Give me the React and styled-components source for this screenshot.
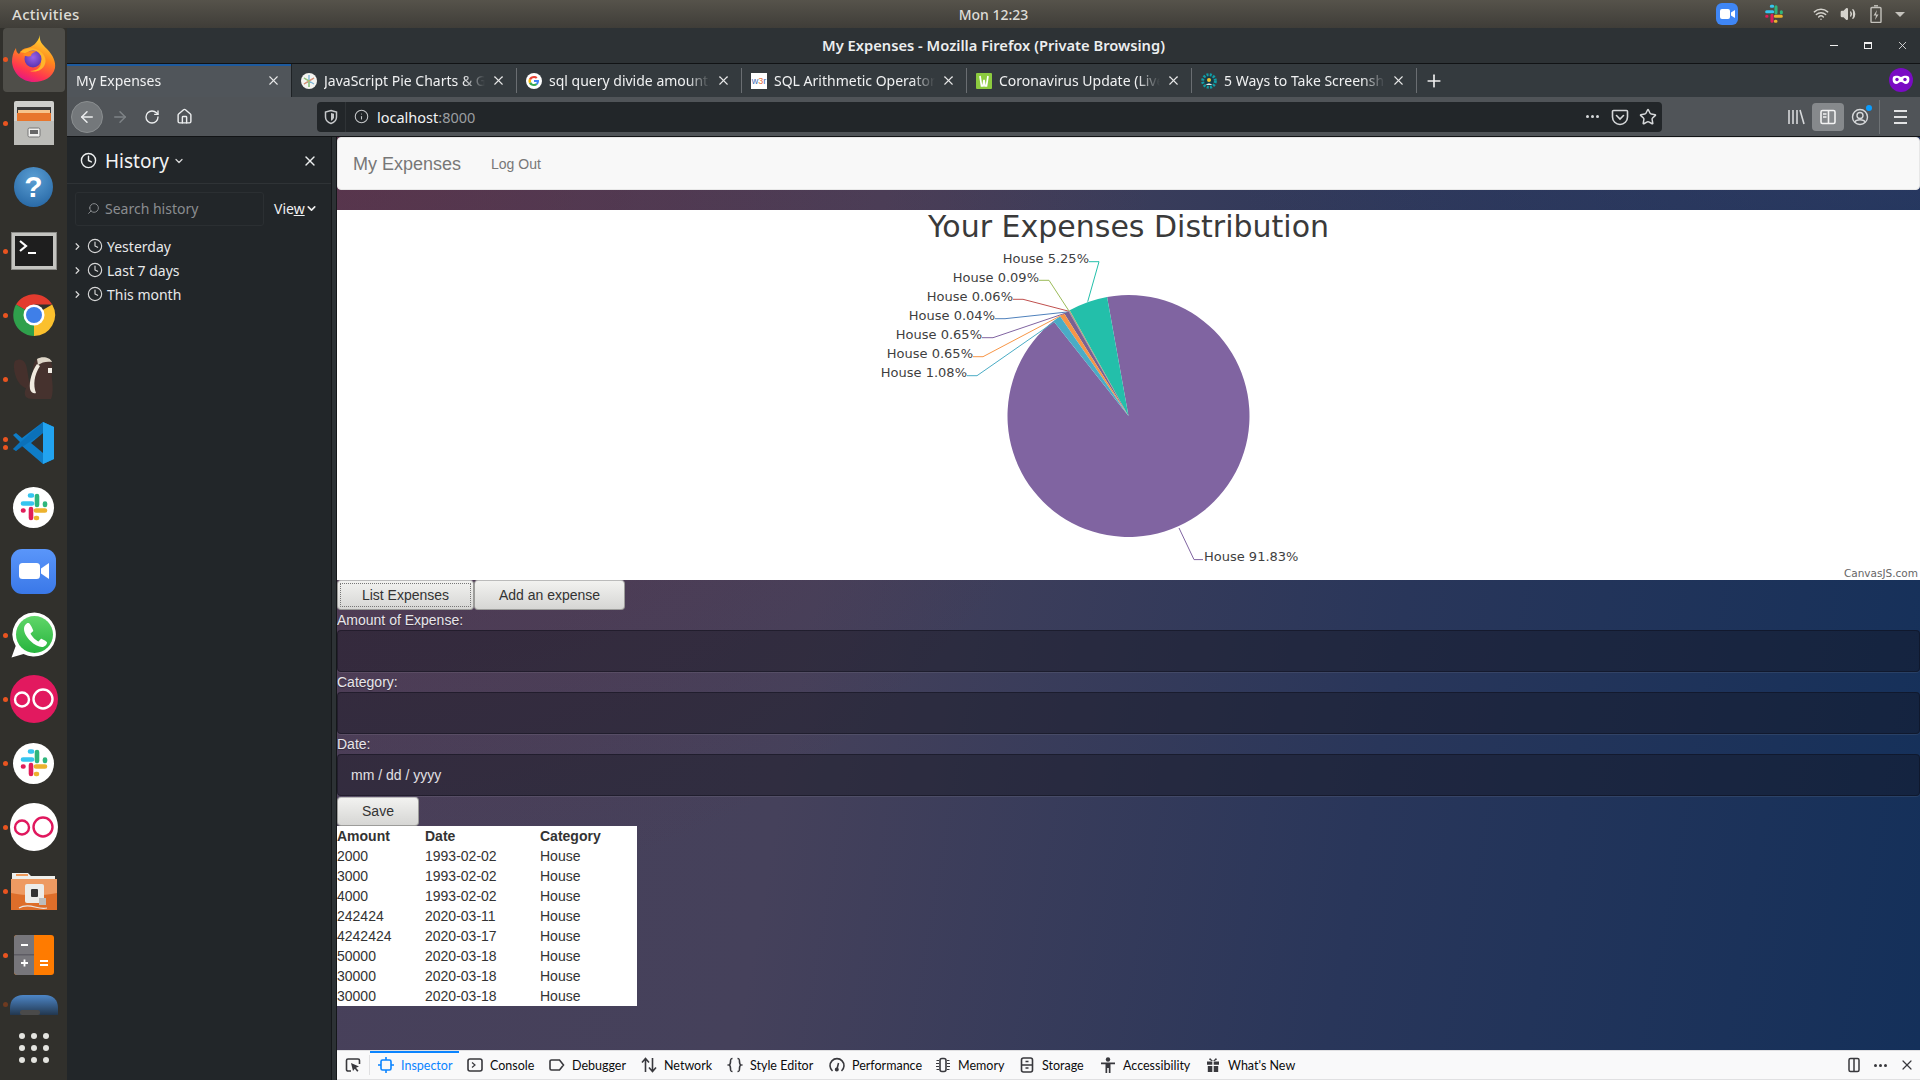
import React from 'react';
import styled, { createGlobalStyle } from 'styled-components';
import {
  ArrowLeft,
  ArrowRight,
  RotateCw,
  Home,
  Info,
  Star,
  X,
  Plus,
  Clock,
  ChevronRight,
  ChevronDown,
  Search,
  Wifi,
  Volume2,
} from 'lucide-react';

const UI_FONT = '"Noto Sans", "Open Sans", sans-serif';
const WEB_FONT = '"Liberation Sans", Arial, sans-serif';
const CHART_FONT = 'DejaVu Sans, sans-serif';

const GlobalStyle = createGlobalStyle`
  html, body {
    margin: 0;
    padding: 0;
    width: 1920px;
    height: 1080px;
    overflow: hidden;
    background: #222;
    font-family: ${UI_FONT};
  }
  * {
    box-sizing: border-box;
  }
`;

/* ---------- dock icons ---------- */

const FirefoxIcon = () => (
  <svg width="46" height="48" viewBox="0 0 46 48">
    <defs>
      <linearGradient id="ffBody" x1="0.7" y1="0" x2="0.3" y2="1">
        <stop offset="0" stopColor="#ffe03a" />
        <stop offset="0.42" stopColor="#ff8a1c" />
        <stop offset="0.78" stopColor="#ff3550" />
        <stop offset="1" stopColor="#e31587" />
      </linearGradient>
      <radialGradient id="ffGlobe" cx="0.5" cy="0.4" r="0.6">
        <stop offset="0" stopColor="#9a62e8" />
        <stop offset="1" stopColor="#5a34b0" />
      </radialGradient>
    </defs>
    <path d="M29 1c-1 6 2 9 7 14 6 6 9 13 8 19-2 9-11 14-21 14C11 48 2 39 1 28c0-5 1-10 4-14 0 3 1 5 3 6 2-4 5-6 8-6 5-1 11-5 13-13z" fill="url(#ffBody)" />
    <path d="M9 18c5-4 13-5 18-2 6 3 9 9 7 14-2 6-9 9-15 7 7 0 12-4 11-10-1-4-6-6-10-5-1-2-6-3-11-4z" fill="#ffb52b" />
    <circle cx="22" cy="25" r="8.500" fill="url(#ffGlobe)" />
    <path d="M12 21c3-4 10-5 14-3-4 0-6 2-6 4-3 1-6 0-8-1z" fill="#ff8a1e" />
  </svg>
);

const FilesIcon = () => (
  <svg width="42" height="44" viewBox="0 0 42 44">
    <rect x="1" y="0" width="40" height="44" rx="2" fill="#cfcfcc" />
    <rect x="4" y="6" width="34" height="14" fill="#3a3a3a" />
    <rect x="5" y="9" width="32" height="3" fill="#f6c48c" />
    <rect x="4" y="12" width="34" height="8" fill="#e8762c" />
    <rect x="1" y="20" width="40" height="24" fill="#bcbcb8" />
    <rect x="15" y="27" width="12" height="9" rx="1.500" fill="#efefed" stroke="#777" />
    <rect x="17" y="29" width="8" height="4" fill="#666" />
  </svg>
);

const HelpIcon = () => <HelpBall>?</HelpBall>;

const TerminalIcon = () => (
  <svg width="46" height="38" viewBox="0 0 46 38">
    <rect x="0.500" y="0.500" width="45" height="37" fill="#c4c4c0" stroke="#8b8b88" />
    <rect x="4" y="4" width="38" height="30" fill="#1e1e1e" />
    <path d="M9 9l6 5-6 5" fill="none" stroke="#fff" strokeWidth="2.200" />
    <path d="M17 21h8" stroke="#fff" strokeWidth="2" />
  </svg>
);

const ChromeIcon = () => (
  <svg width="46" height="46" viewBox="0 0 46 46">
    <path d="M23 23L5 12.600A21 21 0 0 1 41.200 12.500H23z" fill="#e33b2e" />
    <path d="M23 23L41.200 12.500A21 21 0 0 1 23 44z" fill="#fbc02d" />
    <path d="M23 23L23 44A21 21 0 0 1 5 12.600z" fill="#2fa04c" />
    <circle cx="23" cy="23" r="10.500" fill="#fff" />
    <circle cx="23" cy="23" r="8" fill="#3f7fe8" />
  </svg>
);

const BeaverIcon = () => (
  <svg width="44" height="48" viewBox="0 0 44 48">
    <path d="M3 6c6-4 11 0 12 8l3 18c-4 4-12-3-14-10C2 16 1 10 3 6z" fill="#45302c" />
    <path d="M25 4c6-3 14 0 15 6 1 5-1 8 0 14 1 8 1 16-1 20H21c-7 0-9-3-8-8 2-7 8-13 8-20 0-5 1-10 4-12z" fill="#46322e" />
    <path d="M25 9c-5 7-8 17-7 25 1 4 4 5 6 4-3-8-2-18 4-27z" fill="#f0eadf" />
    <path d="M25 4c5-3 13-2 15 3-5-1-10 0-14 3z" fill="#ded6c8" />
    <rect x="36" y="13" width="4" height="5" fill="#f1ede5" />
  </svg>
);

const VsCodeIcon = () => (
  <svg width="44" height="44" viewBox="0 0 44 44">
    <path d="M31 1l11 5v32l-11 5L10 25l-6 5-3-2 7-7-7-7 3-2 6 5z" fill="#0e7dc8" />
    <path d="M31 1l11 5v32l-11 5z" fill="#22a3f0" />
    <path d="M31 12v20l-12-10z" fill="#31302c" />
    <path d="M1 28l3 2L31 12V1z" fill="#0a68ad" opacity="0.55" />
  </svg>
);

const SlackMark = ({ size = 30 }) => (
  <svg width={size} height={size} viewBox="0 0 30 30" strokeLinecap="round" fill="none">
    <path d="M4 11.500h9M11 3.500h2" stroke="#36c5f0" strokeWidth="4.600" />
    <path d="M18 4v9M26 11.500v1.500" stroke="#2eb67d" strokeWidth="4.600" />
    <path d="M17 18.500h9M17 26h1" stroke="#ecb22e" strokeWidth="4.600" />
    <path d="M12 17v9M4 18.500h.5" stroke="#e01e5a" strokeWidth="4.600" />
  </svg>
);

const SlackIcon = () => (
  <WhiteDisc>
    <SlackMark />
  </WhiteDisc>
);

const ZoomIcon = () => (
  <ZoomTile>
    <svg width="30" height="18" viewBox="0 0 30 18">
      <rect x="0" y="1" width="21" height="16" rx="3.500" fill="#fff" />
      <path d="M22 6.500L30 1v16l-8-5.500z" fill="#fff" />
    </svg>
  </ZoomTile>
);

const WhatsappIcon = () => (
  <svg width="46" height="46" viewBox="0 0 46 46">
    <defs>
      <linearGradient id="waFill" x1="0" y1="0" x2="0" y2="1">
        <stop offset="0" stopColor="#60d669" />
        <stop offset="1" stopColor="#27b43e" />
      </linearGradient>
    </defs>
    <path d="M23.500 0.500a22 22 0 0 0-18.800 33.400L0.500 45.500l12-3.600A22 22 0 1 0 23.500 0.500z" fill="#fff" />
    <circle cx="23.500" cy="22.500" r="18.500" fill="url(#waFill)" />
    <path d="M17 11c-1.500 0-4 2.500-4 6 0 4 3 8.500 6.500 12s8 6 11.500 6c3 0 5-2.500 5-4.500 0-1.200-5-3.800-6-3.800l-2.500 2.800c-3-1.300-6.500-5-8-8l2.800-2.500c0-1.200-3.300-8-4.800-8z" fill="#fff" />
  </svg>
);

const RingsIcon = ({ light }) => (
  <RingsDisc $light={light}>
    <svg width="42" height="24" viewBox="0 0 42 24" fill="none" stroke={light ? '#e0185e' : '#fff'} strokeWidth="2.400">
      <circle cx="9" cy="12.500" r="7" />
      <circle cx="30" cy="12" r="9.500" />
    </svg>
  </RingsDisc>
);

const FolderIcon = () => (
  <svg width="46" height="42" viewBox="0 0 46 42">
    <path d="M1 3h16l3 3h24v8H1z" fill="#efefec" />
    <rect x="5" y="4" width="12" height="2" fill="#f09a5a" />
    <path d="M0 9h46v31H0z" fill="#de6e2a" />
    <path d="M0 9h46v14c-15 3-31 3-46 0z" fill="#ee9a62" />
    <rect x="14" y="14" width="19" height="19" rx="2" fill="#ececea" />
    <rect x="20" y="19" width="7" height="8" rx="1" fill="#333" />
    <rect x="28" y="28" width="7" height="7" fill="#bdbdbd" />
    <path d="M8 38c5-3 12-2 16-1 4 1 7 2 12 1" fill="none" stroke="#e8e8e8" strokeWidth="1.200" />
  </svg>
);

const CalcIcon = () => (
  <svg width="40" height="40" viewBox="0 0 40 40">
    <rect width="40" height="40" rx="3" fill="#ff7b00" />
    <path d="M3 0h17v40H3a3 3 0 0 1-3-3V3a3 3 0 0 1 3-3z" fill="#77767b" />
    <path d="M0 19h20v1.500H0z" fill="#5e5c64" />
    <path d="M7 10h7M7 28h7M10.500 24.500v7M26 26h8M26 30h8" stroke="#fff" strokeWidth="1.800" />
  </svg>
);

const DriveIcon = () => (
  <svg width="48" height="20" viewBox="0 0 48 20">
    <defs>
      <linearGradient id="driveFill" x1="0" y1="0" x2="0" y2="1">
        <stop offset="0" stopColor="#4d86c7" />
        <stop offset="1" stopColor="#22374f" />
      </linearGradient>
    </defs>
    <path d="M0 20v-7C0 5 5 0 13 0h22c8 0 13 5 13 13v7z" fill="url(#driveFill)" />
    <rect x="10" y="15" width="20" height="5" rx="2" fill="#4a4a4a" />
  </svg>
);

const dockItems = [
  { id: 'firefox', icon: <FirefoxIcon />, dots: 1, active: true },
  { id: 'files', icon: <FilesIcon />, dots: 1 },
  { id: 'help', icon: <HelpIcon />, dots: 0 },
  { id: 'terminal', icon: <TerminalIcon />, dots: 1 },
  { id: 'chrome', icon: <ChromeIcon />, dots: 1 },
  { id: 'beaver', icon: <BeaverIcon />, dots: 1 },
  { id: 'vscode', icon: <VsCodeIcon />, dots: 2 },
  { id: 'slack', icon: <SlackIcon />, dots: 0 },
  { id: 'zoom', icon: <ZoomIcon />, dots: 0 },
  { id: 'whatsapp', icon: <WhatsappIcon />, dots: 1 },
  { id: 'rings', icon: <RingsIcon />, dots: 1 },
  { id: 'slack2', icon: <SlackIcon />, dots: 1 },
  { id: 'rings2', icon: <RingsIcon light />, dots: 1 },
  { id: 'folder', icon: <FolderIcon />, dots: 1 },
  { id: 'calc', icon: <CalcIcon />, dots: 1 },
];

/* ---------- favicons and toolbar glyphs ---------- */

const PieFavicon = () => (
  <svg width="16" height="16" viewBox="0 0 16 16">
    <circle cx="8" cy="8" r="8" fill="#f4f4f0" />
    <path d="M8 8V2M8 8l5-3M8 8l5 3M8 8v6M8 8l-5 3M8 8L3 5" stroke="#7fb7d8" strokeWidth="1.400" />
    <path d="M8 8l5-3M8 8L3 11" stroke="#e88f6a" strokeWidth="1.400" />
    <path d="M8 8v6M8 8L3 5" stroke="#9cc870" strokeWidth="1.400" />
  </svg>
);

const GoogleFavicon = () => (
  <svg width="16" height="16" viewBox="0 0 16 16">
    <circle cx="8" cy="8" r="8" fill="#fff" />
    <path d="M13 8.100c0-.4 0-.7-.1-1H8v2h2.800c-.2.700-.5 1.200-1 1.500l1.600 1.200c1-.9 1.600-2.200 1.600-3.700z" fill="#4285f4" />
    <path d="M8 13c1.400 0 2.500-.4 3.400-1.200l-1.600-1.200c-.5.300-1.100.5-1.800.5-1.300 0-2.500-.9-2.900-2.100L3 10.200C3.800 11.900 5.800 13 8 13z" fill="#34a853" />
    <path d="M5.100 9c-.2-.7-.2-1.400 0-2L3 5.800c-.7 1.400-.7 3 0 4.400z" fill="#fbbc05" />
    <path d="M8 4.900c.8 0 1.500.3 2 .8L11.500 4.300C10.600 3.500 9.400 3 8 3 5.800 3 3.800 4.100 3 5.800L5.100 7C5.500 5.800 6.700 4.900 8 4.900z" fill="#ea4335" />
  </svg>
);

const W3Favicon = () => (
  <W3Box>
    <b>w</b>
    <em>3</em>
    <b>r</b>
  </W3Box>
);

const WorldFavicon = () => (
  <svg width="16" height="16" viewBox="0 0 16 16">
    <rect width="16" height="16" rx="1" fill="#8ccb3f" />
    <path d="M4 3l1.500 10h1.500L8 7l1 6h1.500L12 3" fill="none" stroke="#fff" strokeWidth="1.700" />
  </svg>
);

const GearFavicon = () => (
  <svg width="16" height="16" viewBox="0 0 16 16">
    <circle cx="8" cy="8" r="6.300" fill="none" stroke="#0f9fa8" strokeWidth="3" strokeDasharray="2 1.300" />
    <circle cx="8" cy="8" r="4.500" fill="#123b4a" />
    <circle cx="8" cy="7" r="2" fill="#f2c230" />
    <path d="M5 12c1-2 5-2 6 0z" fill="#e8e8e8" />
  </svg>
);

const ShieldIcon = () => (
  <svg width="16" height="16" viewBox="0 0 16 16" fill="none" stroke="#c6c8ca" strokeWidth="1.500">
    <path d="M8 1.500l5.500 1.500v5c0 3-2.500 5.500-5.500 6.500-3-1-5.500-3.500-5.500-6.500V3z" />
    <path d="M8 4l3 .8v3.400c0 1.600-1.400 2.800-3 3.500z" fill="#c6c8ca" stroke="none" />
  </svg>
);

const PocketIcon = () => (
  <svg width="18" height="18" viewBox="0 0 18 18" fill="none" stroke="#d6d8da" strokeWidth="1.600">
    <path d="M2.500 2.500h13a1 1 0 0 1 1 1V9a7.500 7.500 0 0 1-15 0V3.500a1 1 0 0 1 1-1z" />
    <path d="M5.500 7.500L9 11l3.500-3.500" strokeLinecap="round" />
  </svg>
);

const LibraryIcon = () => (
  <svg width="18" height="18" viewBox="0 0 18 18" stroke="#d6d8da" strokeWidth="1.600">
    <path d="M2 2v14M6 2v14M10 2v14M13 2l4 14" />
  </svg>
);

const SidebarIcon = () => (
  <svg width="18" height="18" viewBox="0 0 18 18" fill="none" stroke="#f2f2f2" strokeWidth="1.600">
    <rect x="2" y="2.500" width="14" height="13" rx="1.500" />
    <path d="M9.500 2.500v13" />
    <path d="M4 6h3.500M4 9h3.500" />
  </svg>
);

const ProfileIcon = () => (
  <ProfileWrap>
    <svg width="18" height="18" viewBox="0 0 18 18" fill="none" stroke="#d6d8da" strokeWidth="1.400">
      <circle cx="9" cy="9" r="7.500" />
      <circle cx="9" cy="7.500" r="3" />
      <path d="M4 14c1-3 9-3 10 0" />
    </svg>
    <ProfileDot />
  </ProfileWrap>
);

const MaskIcon = () => (
  <MaskBadge>
    <svg width="18" height="10" viewBox="0 0 18 10">
      <path d="M1 2c3-2 5-1 8 0 3-1 5-2 8 0 1 3 0 7-3 7-2 0-3-2-5-2S6 9 4 9C1 9 0 5 1 2z" fill="#fff" />
      <circle cx="5" cy="4.500" r="1.700" fill="#7a0bc4" />
      <circle cx="13" cy="4.500" r="1.700" fill="#7a0bc4" />
    </svg>
  </MaskBadge>
);

const PickIcon = () => (
  <svg width="16" height="16" viewBox="0 0 16 16" fill="none" stroke="#38383d" strokeWidth="1.600">
    <path d="M6 14H3a1.500 1.500 0 0 1-1.500-1.500v-9A1.500 1.500 0 0 1 3 2h10a1.500 1.500 0 0 1 1.500 1.500V7" />
    <path d="M6 6l8 3.500-3 1.200 2.500 3-1.300 1-2.400-3L8 14z" fill="#38383d" stroke="none" />
  </svg>
);

const devIcon = (children, filled) => (
  <svg
    width="16"
    height="16"
    viewBox="0 0 16 16"
    fill={filled ? '#38383d' : 'none'}
    stroke={filled ? 'none' : 'currentColor'}
    strokeWidth="1.600"
  >
    {children}
  </svg>
);

const devTabs = [
  {
    name: 'Inspector',
    width: 89,
    active: true,
    icon: devIcon(
      <>
        <rect x="3" y="3" width="10" height="10" rx="1.500" />
        <path d="M8 0v3M8 13v3M0 8h3M13 8h3" />
      </>
    ),
  },
  {
    name: 'Console',
    width: 82,
    icon: devIcon(
      <>
        <rect x="1" y="2" width="14" height="12" rx="2" />
        <path d="M5 5.500L8 8l-3 2.500" strokeWidth="1.200" />
      </>
    ),
  },
  {
    name: 'Debugger',
    width: 92,
    icon: devIcon(<path d="M2.500 3h8l4 5-4 5h-8A1.500 1.500 0 0 1 1 11.500v-7A1.500 1.500 0 0 1 2.500 3z" />),
  },
  {
    name: 'Network',
    width: 86,
    icon: devIcon(<path d="M4.500 15V2M1 5.500L4.500 1.500 8 5.500M11.500 1v13M8 10.500l3.500 4 3.500-4" />),
  },
  {
    name: 'Style Editor',
    width: 102,
    icon: devIcon(
      <path d="M5.500 1.500c-2 0-2 1-2 3s0 3-1.500 3.500C3.500 8.500 3.500 9.500 3.500 11.500s0 3 2 3M10.500 1.500c2 0 2 1 2 3s0 3 1.500 3.500c-1.500.5-1.500 1.500-1.500 3.500s0 3-2 3" />
    ),
  },
  {
    name: 'Performance',
    width: 106,
    icon: devIcon(
      <>
        <path d="M3.500 14A7 7 0 1 1 12.500 14" />
        <path d="M9.500 6L8 12" />
        <circle cx="7.800" cy="12.500" r="1.200" fill="currentColor" />
      </>
    ),
  },
  {
    name: 'Memory',
    width: 84,
    icon: devIcon(
      <>
        <rect x="5" y="1.500" width="6" height="13" rx="2" />
        <path d="M1.500 3.500H4M1 6.500h3M1 9.500h3M1.500 12.500H4M12 3.500h2.500M12 6.500h3M12 9.500h3M12 12.500h2.500" strokeWidth="1" />
      </>
    ),
  },
  {
    name: 'Storage',
    width: 81,
    icon: devIcon(
      <>
        <rect x="2.500" y="1" width="11" height="14" rx="2" />
        <path d="M2.500 8h11M6.500 4.500h3M6.500 11h3" />
      </>
    ),
  },
  {
    name: 'Accessibility',
    width: 105,
    icon: devIcon(
      <>
        <circle cx="8" cy="2.500" r="2.200" />
        <path d="M1 5.500h14v1.800h-4.500V16H8.800v-5H7.200v5H5.500V7.300H1z" />
      </>,
      true
    ),
  },
  {
    name: "What's New",
    width: 102,
    icon: devIcon(
      <>
        <path d="M2 4.500h5.300v3.300H2zM8.700 4.500H14v3.300H8.700zM2.800 9h4.500v6H2.800zM8.700 9h4.500v6H8.700z" />
        <path d="M5 1l3 3 3-3 1 1.500L9.500 4h-3L4 2.500z" />
      </>,
      true
    ),
  },
];

/* ---------- data ---------- */

const tabs = [
  { title: 'My Expenses', active: true },
  { title: 'JavaScript Pie Charts & Graphs', icon: <PieFavicon /> },
  { title: 'sql query divide amounts by', icon: <GoogleFavicon /> },
  { title: 'SQL Arithmetic Operators', icon: <W3Favicon /> },
  { title: 'Coronavirus Update (Live)', icon: <WorldFavicon /> },
  { title: '5 Ways to Take Screenshots', icon: <GearFavicon /> },
];

const historyRows = ['Yesterday', 'Last 7 days', 'This month'];

const expenses = [
  ['2000', '1993-02-02'],
  ['3000', '1993-02-02'],
  ['4000', '1993-02-02'],
  ['242424', '2020-03-11'],
  ['4242424', '2020-03-17'],
  ['50000', '2020-03-18'],
  ['30000', '2020-03-18'],
  ['30000', '2020-03-18'],
];

const CX = 791.5;
const CY = 206;
const R = 121;

// degrees clockwise from 12 o'clock, read off the reference
const slices = [
  { from: -10.2, to: 321.65, color: '#8064A1' },
  { from: -29.1, to: -10.2, color: '#23BFAA' },
  { from: -29.42, to: -29.1, color: '#9BBB58' },
  { from: -29.64, to: -29.42, color: '#C0504E' },
  { from: -29.78, to: -29.64, color: '#4F81BC' },
  { from: -32.12, to: -29.78, color: '#7a6191' },
  { from: -34.46, to: -32.12, color: '#F79647' },
  { from: -38.35, to: -34.46, color: '#4AACC5' },
];

const pieLabels = [
  { text: 'House 5.25%', x: 752, y: 53, color: '#23BFAA', line: '752,51.7 762,51.7 750.7,91.7' },
  { text: 'House 0.09%', x: 702, y: 72, color: '#9BBB58', line: '702,70.3 712,70.3 732,101' },
  { text: 'House 0.06%', x: 676, y: 91, color: '#C0504E', line: '676,89.3 686,89.3 731,101' },
  { text: 'House 0.04%', x: 658, y: 110, color: '#4F81BC', line: '658,108.7 668,108.7 730,102' },
  { text: 'House 0.65%', x: 645, y: 129, color: '#8064A1', line: '645,127.7 656,127.7 728,103.3' },
  { text: 'House 0.65%', x: 636, y: 148, color: '#F79647', line: '636,146.7 646,146.7 725,105' },
  { text: 'House 1.08%', x: 630, y: 167, color: '#4AACC5', line: '630,165.7 640,165.7 720,110' },
];

const point = deg => {
  const rad = (deg * Math.PI) / 180;
  return [CX + R * Math.sin(rad), CY - R * Math.cos(rad)];
};

const slicePath = ({ from, to }) => {
  const [x1, y1] = point(from);
  const [x2, y2] = point(to);
  const large = to - from > 180 ? 1 : 0;
  return `M${CX} ${CY}L${x1} ${y1}A${R} ${R} 0 ${large} 1 ${x2} ${y2}Z`;
};

const PieChart = () => (
  <svg width="1583" height="370" viewBox="0 0 1583 370">
    <text x={CX} y="27" textAnchor="middle" fontFamily={CHART_FONT} fontSize="30" fill="#3a3a3a">
      Your Expenses Distribution
    </text>
    {slices.map(s => (
      <path key={s.from} d={slicePath(s)} fill={s.color} />
    ))}
    {pieLabels.map(l => (
      <g key={l.line}>
        <polyline points={l.line} fill="none" stroke={l.color} strokeWidth="1" />
        <text x={l.x} y={l.y} textAnchor="end" fontFamily={CHART_FONT} fontSize="13" fill="#3f3f3f">
          {l.text}
        </text>
      </g>
    ))}
    <polyline points="842,318 857,349.6 866,349.6" fill="none" stroke="#8064A1" strokeWidth="1" />
    <text x="867" y="351" fontFamily={CHART_FONT} fontSize="13" fill="#3f3f3f">
      House 91.83%
    </text>
    <text x="1581" y="367" textAnchor="end" fontFamily={CHART_FONT} fontSize="10.5" fill="#666">
      CanvasJS.com
    </text>
  </svg>
);

/* ---------- page ---------- */

const App = () => (
  <Screen>
    <GlobalStyle />
    <TopBar>
      <Activities>Activities</Activities>
      <TopClock>Mon 12:23</TopClock>
      <TrayZoom>
        <svg width="15" height="10" viewBox="0 0 15 10">
          <rect width="10" height="10" rx="2" fill="#fff" />
          <path d="M11 3.500L15 1v8l-4-2.500z" fill="#fff" />
        </svg>
      </TrayZoom>
      <TraySlack>
        <SlackMark size={20} />
      </TraySlack>
      <TrayGlyphs>
        <Wifi size={16} color="#d4d2cc" strokeWidth={2.2} />
        <Volume2 size={16} color="#d4d2cc" fill="#d4d2cc" strokeWidth={2} />
        <TrayBattery>
          <svg width="12" height="18" viewBox="0 0 12 18" fill="none" stroke="#c4c2bc" strokeWidth="1.400">
            <rect x="1" y="2.500" width="10" height="15" rx="1" />
            <path d="M4 0.800h4" />
            <path d="M7 5L3.500 10.500H6L5 15l3.500-5.500H6z" fill="#c4c2bc" stroke="none" />
          </svg>
        </TrayBattery>
        <TrayCaret />
      </TrayGlyphs>
    </TopBar>
    <Desktop>
      <Dock>
        {dockItems.map(({ id, icon, dots, active }) => (
          <DockItem key={id} $active={active}>
            <DockDots>
              {Array.from({ length: dots }).map((_, i) => (
                <i key={i} />
              ))}
            </DockDots>
            {icon}
          </DockItem>
        ))}
        <DriveSlot>
          <DimDot />
          <DriveIcon />
        </DriveSlot>
        <DotGrid>
          {Array.from({ length: 9 }).map((_, i) => (
            <i key={i} />
          ))}
        </DotGrid>
      </Dock>
      <Browser>
        <TitleBar>
          <WindowTitle>My Expenses - Mozilla Firefox (Private Browsing)</WindowTitle>
          <WindowButtons>
            <MinButton />
            <MaxButton />
            <X size={13} color="#e4e4e4" strokeWidth={1.6} />
          </WindowButtons>
        </TitleBar>
        <TabBar>
          {tabs.map(({ title, active, icon }) => (
            <Tab key={title} $active={active}>
              {icon && <Favicon>{icon}</Favicon>}
              <TabTitle>{title}</TabTitle>
              <X size={15} color="#e8e8e8" strokeWidth={1.7} />
            </Tab>
          ))}
          <NewTab>
            <Plus size={20} color="#eee" strokeWidth={2} />
          </NewTab>
          <MaskIcon />
        </TabBar>
        <Toolbar>
          <BackButton>
            <ArrowLeft size={18} color="#eceeef" strokeWidth={2} />
          </BackButton>
          <NavButton>
            <ArrowRight size={18} color="#7e8386" strokeWidth={2} />
          </NavButton>
          <NavButton>
            <RotateCw size={16} color="#eceeef" strokeWidth={2} />
          </NavButton>
          <NavButton>
            <Home size={17} color="#eceeef" strokeWidth={2} />
          </NavButton>
          <UrlBar>
            <UrlShield>
              <ShieldIcon />
            </UrlShield>
            <UrlInfo>
              <Info size={15} color="#c6c8ca" strokeWidth={1.7} />
            </UrlInfo>
            <UrlText>
              localhost<span>:8000</span>
            </UrlText>
            <UrlAction>
              <UrlDots>
                <i />
                <i />
                <i />
              </UrlDots>
            </UrlAction>
            <UrlAction>
              <PocketIcon />
            </UrlAction>
            <UrlAction>
              <Star size={18} color="#d6d8da" strokeWidth={2} />
            </UrlAction>
          </UrlBar>
          <RightTools>
            <ToolButton>
              <LibraryIcon />
            </ToolButton>
            <ToolButton $active>
              <SidebarIcon />
            </ToolButton>
            <ToolButton>
              <ProfileIcon />
            </ToolButton>
            <ToolSeparator />
            <ToolButton>
              <Burger>
                <i />
                <i />
                <i />
              </Burger>
            </ToolButton>
          </RightTools>
        </Toolbar>
        <Main>
          <Sidebar>
            <SidebarHeader>
              <Clock size={17} color="#eceeef" strokeWidth={2} />
              <SidebarTitle>History</SidebarTitle>
              <ChevronDown size={12} color="#d8d8d8" strokeWidth={2.5} />
              <SidebarClose>
                <X size={16} color="#eceeef" strokeWidth={2} />
              </SidebarClose>
            </SidebarHeader>
            <SearchRow>
              <SearchBox>
                <FlippedSearch>
                  <Search size={13} color="#8a8d90" strokeWidth={1.8} />
                </FlippedSearch>
                <span>Search history</span>
              </SearchBox>
              <ViewButton>
                <span>
                  Vie<u>w</u>
                </span>
                <ChevronDown size={13} color="#eee" strokeWidth={3} />
              </ViewButton>
            </SearchRow>
            <HistoryTree>
              {historyRows.map(row => (
                <HistoryRow key={row}>
                  <ChevronRight size={11} color="#d8d8d8" strokeWidth={2.6} />
                  <Clock size={16} color="#d8d8d8" strokeWidth={1.7} />
                  <span>{row}</span>
                </HistoryRow>
              ))}
            </HistoryTree>
          </Sidebar>
          <Splitter />
          <Content>
            <Page>
              <Navbar>
                <Brand>My Expenses</Brand>
                <NavLink>Log Out</NavLink>
              </Navbar>
              <ChartPanel>
                <PieChart />
              </ChartPanel>
              <ButtonRow>
                <FormButton $focused $width={137}>
                  List Expenses
                </FormButton>
                <FormButton $width={151}>Add an expense</FormButton>
              </ButtonRow>
              <Field>
                <FieldLabel>Amount of Expense:</FieldLabel>
                <FieldInput readOnly />
              </Field>
              <Field>
                <FieldLabel>Category:</FieldLabel>
                <FieldInput readOnly />
              </Field>
              <Field>
                <FieldLabel>Date:</FieldLabel>
                <FieldInput readOnly value="mm / dd / yyyy" />
              </Field>
              <SaveButton $width={82}>Save</SaveButton>
              <ExpenseTable>
                <thead>
                  <tr>
                    <th>Amount</th>
                    <th>Date</th>
                    <th>Category</th>
                  </tr>
                </thead>
                <tbody>
                  {expenses.map(([amount, date], i) => (
                    <tr key={i}>
                      <td>{amount}</td>
                      <td>{date}</td>
                      <td>House</td>
                    </tr>
                  ))}
                </tbody>
              </ExpenseTable>
            </Page>
            <DevTools>
              <PickSlot>
                <PickIcon />
              </PickSlot>
              {devTabs.map(({ name, icon, active, width }) => (
                <DevTab key={name} $active={active} $width={width}>
                  {icon}
                  <span>{name}</span>
                </DevTab>
              ))}
              <DevActions>
                <svg width="16" height="16" viewBox="0 0 16 16" fill="none" stroke="#38383d" strokeWidth="1.500">
                  <rect x="3" y="1.500" width="10" height="13" rx="1.500" />
                  <path d="M8 1.500v13" />
                </svg>
                <UrlDotsDark>
                  <i />
                  <i />
                  <i />
                </UrlDotsDark>
                <X size={16} color="#38383d" strokeWidth={1.8} />
              </DevActions>
            </DevTools>
          </Content>
        </Main>
      </Browser>
    </Desktop>
  </Screen>
);

const Screen = styled.div`
  width: 1920px;
  height: 1080px;
  display: flex;
  flex-direction: column;
  overflow: hidden;
`;

const TopBar = styled.header`
  height: 28px;
  flex: none;
  display: flex;
  align-items: center;
  position: relative;
  padding: 0 12px;
  background: linear-gradient(#56534b, #3f3d38);
  color: #dedcd6;
  font-size: 14px;
  font-weight: 500;
`;

const Activities = styled.span`
  width: 1000px;
  font-size: 15px;
  letter-spacing: 0.3px;
`;

const TopClock = styled.span`
  position: absolute;
  left: 0;
  right: 0;
  text-align: center;
  padding-left: 67px;
  pointer-events: none;
`;

const TrayZoom = styled.div`
  width: 22px;
  height: 22px;
  margin-left: 704px;
  border-radius: 6px;
  background: #3f86f5;
  display: flex;
  align-items: center;
  justify-content: center;
`;

const TraySlack = styled.div`
  margin-left: 24px;
  width: 24px;
  display: flex;
  justify-content: center;
`;

const TrayGlyphs = styled.div`
  display: flex;
  align-items: center;
  gap: 11px;
  margin-left: 27px;
`;

const TrayBattery = styled.span`
  display: flex;
  margin-left: 3px;
`;

const TrayCaret = styled.i`
  width: 0;
  height: 0;
  margin-left: 2px;
  border-left: 5px solid transparent;
  border-right: 5px solid transparent;
  border-top: 5px solid #c4c2bc;
`;

const Desktop = styled.div`
  flex: 1;
  display: flex;
  min-height: 0;
`;

const Dock = styled.nav`
  width: 67px;
  flex: none;
  display: flex;
  flex-direction: column;
  align-items: center;
  background: #31302c;
`;

const DockItem = styled.div`
  position: relative;
  width: 62px;
  height: 64px;
  flex: none;
  display: flex;
  align-items: center;
  justify-content: center;
  padding-bottom: ${p => (p.$active ? '4px' : '2px')};
  border-radius: 4px;
  background: ${p => (p.$active ? '#4f4e49' : 'transparent')};
`;

const DockDots = styled.div`
  position: absolute;
  left: 0;
  top: 0;
  bottom: 2px;
  display: flex;
  flex-direction: column;
  justify-content: center;
  gap: 3px;

  i {
    width: 5px;
    height: 5px;
    border-radius: 50%;
    background: #e95420;
  }
`;

const HelpBall = styled.div`
  width: 39px;
  height: 40px;
  border-radius: 50%;
  background: radial-gradient(circle at 50% 30%, #5b9fd4, #1f5f9e);
  color: #fff;
  font: bold 30px/40px ${WEB_FONT};
  text-align: center;
`;

const WhiteDisc = styled.div`
  width: 41px;
  height: 41px;
  border-radius: 50%;
  background: #fff;
  display: flex;
  align-items: center;
  justify-content: center;
`;

const ZoomTile = styled.div`
  width: 45px;
  height: 45px;
  border-radius: 11px;
  background: linear-gradient(#5a96fa, #3a78e8);
  display: flex;
  align-items: center;
  justify-content: center;
`;

const RingsDisc = styled.div`
  width: 48px;
  height: 48px;
  border-radius: 50%;
  background: ${p => (p.$light ? '#fff' : '#e2195f')};
  display: flex;
  align-items: center;
  justify-content: center;
`;

const DriveSlot = styled.div`
  position: relative;
  width: 62px;
  height: 45px;
  flex: none;
  display: flex;
  justify-content: center;
  padding-top: 7px;
`;

const DimDot = styled.i`
  position: absolute;
  left: 0;
  top: 14px;
  width: 5px;
  height: 5px;
  border-radius: 50%;
  background: #6e3a20;
`;

const DotGrid = styled.div`
  display: grid;
  grid-template-columns: repeat(3, 6px);
  gap: 6px;

  i {
    width: 6px;
    height: 6px;
    border-radius: 50%;
    background: #e4e4e0;
  }
`;

const Browser = styled.div`
  flex: 1;
  display: flex;
  flex-direction: column;
  min-width: 0;
`;

const TitleBar = styled.div`
  height: 36px;
  flex: none;
  position: relative;
  display: flex;
  align-items: center;
  justify-content: center;
  background: #2d3235;
  border-bottom: 1px solid #111315;
`;

const WindowTitle = styled.span`
  padding-bottom: 2px;
  color: #eceeef;
  font-size: 14.7px;
  font-weight: 600;
`;

const WindowButtons = styled.div`
  position: absolute;
  right: 1px;
  top: 0;
  bottom: 0;
  display: grid;
  grid-auto-flow: column;
  grid-auto-columns: 34px;
  align-items: center;
  justify-items: center;
`;

const MinButton = styled.i`
  width: 8px;
  height: 1px;
  background: #f0f0f0;
`;

const MaxButton = styled.i`
  width: 8px;
  height: 7px;
  border: 1px solid #f0f0f0;
  border-top-width: 2px;
`;

const TabBar = styled.div`
  height: 33px;
  flex: none;
  display: flex;
  align-items: stretch;
  background: #343a3e;
`;

const Tab = styled.div`
  width: 225px;
  flex: none;
  display: flex;
  align-items: center;
  gap: 6px;
  padding: 0 10px 0 9px;
  color: #f0f1f2;
  font-size: 14px;
  background: ${p => (p.$active ? '#50555a' : 'transparent')};
  box-shadow: ${p => (p.$active ? 'inset 0 2px 0 #1d5a9e' : 'none')};
  border-right: 1px solid ${p => (p.$active ? '#1e2225' : '#6a6e72')};
  border-image: ${p =>
    p.$active ? 'none' : 'linear-gradient(transparent 15%, #6a6e72 15%, #6a6e72 85%, transparent 85%) 1'};
`;

const Favicon = styled.span`
  width: 16px;
  height: 16px;
  flex: none;
  display: flex;
  margin-right: 1px;
`;

const TabTitle = styled.span`
  flex: 1;
  min-width: 0;
  white-space: nowrap;
  overflow: hidden;
  mask-image: linear-gradient(to right, #000 86%, transparent 100%);
`;

const W3Box = styled.span`
  width: 16px;
  height: 16px;
  background: #fff;
  font: 9px/16px ${WEB_FONT};
  text-align: center;

  b {
    font-weight: 400;
    color: #3f6db5;
  }
  em {
    font-style: normal;
    color: #e8703a;
  }
`;

const NewTab = styled.div`
  width: 33px;
  display: flex;
  align-items: center;
  justify-content: center;
`;

const MaskBadge = styled.div`
  width: 24px;
  height: 24px;
  margin: 4px 7px 0 auto;
  border-radius: 50%;
  background: #7a0bc4;
  display: flex;
  align-items: center;
  justify-content: center;
`;

const Toolbar = styled.div`
  height: 40px;
  flex: none;
  display: flex;
  align-items: center;
  padding-left: 4px;
  background: #505458;
  border-bottom: 1px solid #121416;
`;

const NavButton = styled.div`
  width: 32px;
  height: 32px;
  flex: none;
  display: flex;
  align-items: center;
  justify-content: center;
`;

const BackButton = styled(NavButton)`
  margin-right: 1px;
  border-radius: 50%;
  background: #74787b;
  border: 1px solid #8a8e90;
`;

const UrlBar = styled.div`
  width: 1345px;
  height: 30px;
  flex: none;
  margin-left: 117px;
  display: flex;
  align-items: center;
  border-radius: 4px;
  background: #222629;
`;

const UrlShield = styled.div`
  width: 29px;
  height: 30px;
  display: flex;
  align-items: center;
  justify-content: center;
  border-right: 1px solid #2f3336;
`;

const UrlInfo = styled.div`
  width: 31px;
  display: flex;
  justify-content: center;
`;

const UrlText = styled.div`
  flex: 1;
  color: #f2f3f4;
  font-size: 14.5px;

  span {
    color: #9b9ea1;
  }
`;

const UrlAction = styled.div`
  width: 28px;
  display: flex;
  justify-content: center;
`;

const UrlDots = styled.div`
  display: flex;
  gap: 2px;

  i {
    width: 3px;
    height: 3px;
    border-radius: 50%;
    background: #d6d8da;
  }
`;

const UrlDotsDark = styled(UrlDots)`
  i {
    background: #38383d;
  }
`;

const RightTools = styled.div`
  display: flex;
  align-items: center;
  margin-left: 118px;
`;

const ToolButton = styled.div`
  width: 32px;
  height: 28px;
  display: flex;
  align-items: center;
  justify-content: center;
  border-radius: 4px;
  background: ${p => (p.$active ? '#86898c' : 'transparent')};
`;

const ToolSeparator = styled.i`
  width: 1px;
  height: 34px;
  margin: 0 4px 0 3px;
  background: #6e7275;
`;

const ProfileWrap = styled.div`
  position: relative;
  display: flex;
`;

const ProfileDot = styled.i`
  position: absolute;
  top: -3px;
  right: -3px;
  width: 6px;
  height: 6px;
  border-radius: 50%;
  background: #0a9dff;
`;

const Burger = styled.div`
  width: 13px;
  display: flex;
  flex-direction: column;
  gap: 4px;

  i {
    height: 2px;
    background: #e2e3e4;
  }
`;

const Main = styled.div`
  flex: 1;
  display: flex;
  min-height: 0;
`;

const Sidebar = styled.aside`
  width: 264px;
  flex: none;
  background: #222629;
  color: #e8e9ea;
`;

const SidebarHeader = styled.div`
  height: 47px;
  display: flex;
  align-items: center;
  padding: 1px 13px 0;
  border-bottom: 1px solid #2f3336;
`;

const SidebarTitle = styled.span`
  margin: 0 4px 0 8px;
  font-size: 19px;
  color: #f2f3f4;
`;

const SidebarClose = styled.span`
  margin-left: auto;
  display: flex;
`;

const SearchRow = styled.div`
  display: flex;
  align-items: center;
  padding: 8px 0 0 8px;
`;

const SearchBox = styled.div`
  width: 189px;
  height: 34px;
  display: flex;
  align-items: center;
  gap: 5px;
  padding: 0 0 2px 11px;
  border: 1px solid #2b2f32;
  border-radius: 3px;
  color: #8a8d90;
  font-size: 14px;
`;

const FlippedSearch = styled.span`
  display: flex;
  transform: scaleX(-1);
`;

const ViewButton = styled.div`
  display: flex;
  align-items: center;
  margin-left: 10px;
  padding-bottom: 1px;
  font-size: 14px;
  color: #f0f1f2;

  u {
    text-decoration-thickness: 1px;
  }
`;

const HistoryTree = styled.div`
  padding: 9px 0 0 5px;
`;

const HistoryRow = styled.div`
  height: 24px;
  display: flex;
  align-items: center;
  gap: 4px;
  padding-bottom: 2px;
  font-size: 14px;
  color: #e8e9ea;
`;

const Splitter = styled.div`
  width: 6px;
  flex: none;
  background: #2d3235;
  border-left: 1px solid #15181a;
  border-right: 1px solid #15181a;
`;

const Content = styled.div`
  flex: 1;
  display: flex;
  flex-direction: column;
  min-width: 0;
`;

const Page = styled.main`
  flex: 1;
  min-height: 0;
  overflow: hidden;
  background:
    radial-gradient(ellipse 820px 780px at 0 0, rgba(104, 42, 62, 0.52), transparent),
    radial-gradient(ellipse 700px 260px at 100% 0, rgba(74, 72, 110, 0.35), transparent),
    linear-gradient(100deg, #48405a 0%, #45415b 32%, #29365a 66%, #14305a 100%);
  font-family: ${WEB_FONT};
  font-size: 14px;
  line-height: 20px;
`;

const Navbar = styled.div`
  height: 53px;
  display: flex;
  align-items: center;
  padding: 0 0 0 15px;
  background: #f8f8f8;
  border: 1px solid #e7e7e7;
  border-radius: 4px;
`;

const Brand = styled.span`
  margin-top: 1px;
  font-size: 18px;
  color: #777;
`;

const NavLink = styled.span`
  margin-left: 30px;
  font-size: 14px;
  color: #777;
`;

const ChartPanel = styled.section`
  height: 370px;
  margin-top: 20px;
  background: #fff;

  svg {
    display: block;
  }
`;

const ButtonRow = styled.div`
  display: flex;
  height: 30px;
`;

const FormButton = styled.button`
  width: ${p => p.$width}px;
  height: 30px;
  padding: 0;
  border: 1px solid #9c9c9a;
  border-top-color: #bbb;
  border-radius: 4px;
  background: linear-gradient(#f2f2f0, #d6d6d4);
  color: #333;
  font: 14px/20px ${WEB_FONT};
  outline: ${p => (p.$focused ? '1px dotted #777' : 'none')};
  outline-offset: -4px;
`;

const Field = styled.div`
  display: flex;
  flex-direction: column;
`;

const FieldLabel = styled.label`
  height: 20px;
  color: #e8e6ea;
  text-shadow: 0 1px 1px rgba(0, 0, 0, 0.3);
`;

const FieldInput = styled.input`
  height: 42px;
  width: 100%;
  padding: 0 13px;
  border: 1px solid rgba(10, 10, 20, 0.4);
  border-radius: 4px;
  background: rgba(18, 18, 28, 0.42);
  box-shadow: 0 1px 0 rgba(255, 255, 255, 0.08);
  color: #e2e0e4;
  font: 14px ${WEB_FONT};
  outline: none;
`;

const SaveButton = styled(FormButton)`
  display: block;
  margin-top: 1px;
  height: 29px;
  padding-bottom: 2px;
`;

const ExpenseTable = styled.table`
  width: 300px;
  table-layout: fixed;
  border-collapse: collapse;
  background: #fff;
  color: #333;
  font: 14px/20px ${WEB_FONT};

  th,
  td {
    padding: 0;
    text-align: left;
  }
  th:nth-child(1) {
    width: 88px;
  }
  th:nth-child(2) {
    width: 115px;
  }
`;

const DevTools = styled.footer`
  height: 30px;
  flex: none;
  display: flex;
  align-items: stretch;
  background: #f9f9fa;
  border-top: 1px solid #e0e0e2;
  border-bottom: 1px solid #e0e0e2;
  color: #0c0c0d;
  font-family: Lato, ${UI_FONT};
  font-size: 12.5px;
`;

const PickSlot = styled.div`
  width: 33px;
  display: flex;
  align-items: center;
  justify-content: center;
  border-right: 1px solid #e0e0e2;
  margin: 4px 0;
`;

const DevTab = styled.div`
  width: ${p => p.$width}px;
  flex: none;
  display: flex;
  align-items: center;
  gap: 7px;
  padding: 0 0 0 8px;
  color: ${p => (p.$active ? '#0a84ff' : '#38383d')};
  box-shadow: ${p => (p.$active ? 'inset 0 2px 0 #0a84ff' : 'none')};

  span {
    color: ${p => (p.$active ? '#0a84ff' : '#0c0c0d')};
  }
  svg {
    flex: none;
  }
`;

const DevActions = styled.div`
  margin-left: auto;
  display: flex;
  align-items: center;
  gap: 12px;
  padding-right: 5px;
`;

export default App;
